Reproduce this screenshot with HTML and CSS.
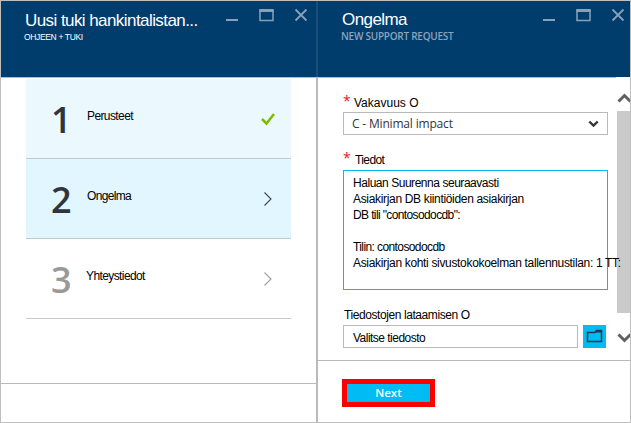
FILE: index.html
```html
<!DOCTYPE html>
<html lang="fi">
<head>
<meta charset="utf-8">
<title>Ongelma</title>
<link rel="stylesheet" href="styles.css">
</head>
<body>
<div class="portal">
  <section class="blade blade-steps">
    <header class="blade-header">
      <div class="heading">
        <h1 class="title title-request">Uusi tuki hankintalistan...</h1>
        <p class="subtitle subtitle-help">OHJEEN + TUKI</p>
      </div>
      <svg class="controls" width="84" height="16" viewBox="0 0 84 16" fill="none" stroke="#87a1b9">
        <path d="M1 13h12" stroke-width="2"/>
        <path d="M35 3v10.500h13v-10.500" stroke-width="1.5"/><path d="M34.250 3.500h14.500" stroke-width="3"/>
        <path d="M70.500 2.500l11 11M81.500 2.500l-11 11" stroke-width="1.8"/>
      </svg>
    </header>
    <ol class="steps">
      <li class="step step-done">
        <span class="number">1</span><span class="label label-basics">Perusteet</span>
        <svg class="mark" width="16" height="16" viewBox="0 0 16 16" fill="none" stroke="#7fba00" stroke-width="2.5"><path d="M2 7l4.500 4.500L14 2"/></svg>
      </li>
      <li class="step step-active">
        <span class="number">2</span><span class="label label-problem">Ongelma</span>
        <svg class="mark" width="16" height="16" viewBox="0 0 16 16" fill="none" stroke="#3b4652" stroke-width="1.1"><path d="M4.500 .5L11 7l-6.500 6.500"/></svg>
      </li>
      <li class="step step-pending">
        <span class="number">3</span><span class="label label-contact">Yhteystiedot</span>
        <svg class="mark" width="16" height="16" viewBox="0 0 16 16" fill="none" stroke="#a0a0a0" stroke-width="1.1"><path d="M4.500 .5L11 7l-6.500 6.500"/></svg>
      </li>
    </ol>
    <footer class="blade-footer"></footer>
  </section>
  <section class="blade blade-problem">
    <header class="blade-header">
      <div class="heading">
        <h2 class="title title-problem">Ongelma</h2>
        <p class="subtitle subtitle-new">NEW SUPPORT REQUEST</p>
      </div>
      <svg class="controls" width="84" height="16" viewBox="0 0 84 16" fill="none" stroke="#87a1b9">
        <path d="M1 13h12" stroke-width="2"/>
        <path d="M35 3v10.500h13v-10.500" stroke-width="1.5"/><path d="M34.250 3.500h14.500" stroke-width="3"/>
        <path d="M70.500 2.500l11 11M81.500 2.500l-11 11" stroke-width="1.8"/>
      </svg>
    </header>
    <div class="content">
      <form class="form">
        <div class="caption caption-severity"><span class="star">*</span><span class="text-severity">Vakavuus O</span></div>
        <div class="field select"><span class="choice">C - Minimal impact</span>
          <svg width="11" height="8" viewBox="0 0 11 8" fill="none" stroke="#30353d" stroke-width="2.4"><path d="M1.300 1.500l4.200 4 4.200-4"/></svg>
        </div>
        <div class="caption caption-details"><span class="star">*</span><span class="text-details">Tiedot</span></div>
        <div class="details">
          <p class="line line-want">Haluan Suurenna seuraavasti</p>
          <p class="line line-quota">Asiakirjan DB kiintiöiden asiakirjan</p>
          <p class="line line-account">DB tili "contosodocdb":</p>
          <p class="line"></p>
          <p class="line line-name">Tilin: contosodocdb</p>
          <p class="line line-storage">Asiakirjan kohti sivustokokoelman tallennustilan: 1 TT:</p>
        </div>
        <div class="caption caption-upload">Tiedostojen lataamisen O</div>
        <div class="upload">
          <div class="field file"><span class="file-text">Valitse tiedosto</span></div>
          <div class="browse">
            <svg width="17" height="15" viewBox="0 0 17 15"><path d="M1.500 3.500H9L10.500 1.500H15.500V12.500H1.500Z" fill="none" stroke="#24394a" stroke-width="1.5"/><path d="M9 3.500L10.500 1.500H15.500V3.500Z" fill="#24394a"/></svg>
          </div>
        </div>
      </form>
      <div class="scrollbar">
        <svg width="13" height="10" viewBox="0 0 13 10" fill="none" stroke="#606060" stroke-width="3"><path d="M1.500 8.500L7.500 2.500l6 6"/></svg>
        <div class="thumb"></div>
        <svg width="13" height="10" viewBox="0 0 13 10" fill="none" stroke="#606060" stroke-width="3"><path d="M1.500 1.500l6 6 6-6"/></svg>
      </div>
    </div>
    <footer class="blade-footer"><div class="next">Next</div></footer>
  </section>
</div>
</body>
</html>
```

FILE: styles.css
```css
* { box-sizing: border-box; }
body, h1, h2, p, ol { margin: 0; padding: 0; }
body { width: 631px; height: 423px; overflow: hidden; background: #fff; color: #000; font: 12px/16px "Liberation Sans", sans-serif; }
.portal { display: grid; grid-template-columns: 317px 312px; width: 631px; height: 423px; border: 1px solid #bfbfbf; }
.blade { display: flex; flex-direction: column; height: 421px; min-width: 0; }
.blade-steps { border-right: 2px solid #bababa; }
.blade-header { display: flex; justify-content: space-between; height: 76px; flex: none; background: #003c6c; color: #fff; }
.blade-steps .blade-header { width: 317px; padding-left: 23px; padding-right: 7px; border-right: 2px solid #1a4d79; }
.blade-problem .blade-header { padding-left: 23px; padding-right: 4px; }
.controls { margin-top: 6px; flex: none; }
.heading { padding-top: 10px; white-space: nowrap; }
.title { font-size: 17px; line-height: 20px; font-weight: 400; }
.title-request { padding-left: 1px; letter-spacing: -.57px; }
.title-problem { padding-left: 1px; letter-spacing: -.57px; margin-top: -1px; }
.subtitle { line-height: 12px; }
.subtitle-help { font-size: 8.5px; letter-spacing: -.35px; }
.subtitle-new { font: 600 10px/12px "Open Sans", sans-serif; color: #8ba5bc; letter-spacing: -.25px; }
.steps { flex: 1; list-style: none; padding: 1px 25px 0; border-top: 1px solid #bababa; }
.step { display: flex; align-items: center; height: 80px; border-bottom: 1px solid #c5c9cc; padding: 2px 15px 0 25px; }
.step-done { background: #ebf9ff; }
.step-active { background: #e1f6fe; }
.number { width: 36px; font: 600 36px/40px "Open Sans", sans-serif; color: #30343d; }
.step-pending .number { color: #999; }
.label { flex: 1; padding-bottom: 8px; }
.label-basics { letter-spacing: -.6px; }
.label-problem { letter-spacing: -.67px; }
.label-contact { letter-spacing: -.6px; margin-left: -1px; }
.blade-footer { border-top: 1px solid #bababa; }
.blade-steps .blade-footer { height: 39px; }
.blade-problem .blade-footer { height: 62px; padding: 18px 0 0 24px; }
.content { display: flex; justify-content: space-between; height: 283px; padding-left: 25px; }
.form { position: relative; z-index: 1; width: 265px; padding-top: 17px; white-space: nowrap; }
.content::before { content: ""; position: absolute; left: 318px; top: 77px; width: 298px; height: 1px; background: #bababa; }
.caption { display: flex; height: 18px; }
.caption-severity { padding-top: 1px; }
.star { width: 11px; color: #e81123; font: 14px/12px "Open Sans", sans-serif; }
.field { height: 23px; border: 1px solid #bababa; background: #fff; }
.select { display: flex; align-items: center; justify-content: space-between; padding: 0 8px; }
.choice { font: 12px/20px "Open Sans", sans-serif; color: #30353d; letter-spacing: -.18px; }
.caption-details { margin-top: 17px; padding-top: 0; }
.text-details { margin-left: 1px; letter-spacing: -.6px; }
.details { height: 120px; border: 1px solid #00bcf2; padding: 4px 9px; }
.line { height: 16px; }
.line-want { letter-spacing: -.46px; }
.line-quota { letter-spacing: -.33px; }
.line-account { letter-spacing: -.62px; }
.line-name { letter-spacing: -.6px; }
.line-storage { letter-spacing: -.33px; }
.caption-upload { margin-top: 17px; padding-left: 1px; letter-spacing: -.42px; }
.upload { display: flex; gap: 5px; }
.file { width: 235px; padding: 4px 9px; line-height: 16px; }
.file-text { letter-spacing: -.52px; }
.browse { display: grid; place-items: center; width: 23px; height: 23px; background: #00bcf2; }
.scrollbar { width: 13px; height: 270px; padding-top: 16px; display: flex; flex-direction: column; }
.thumb { flex: none; height: 202px; margin: 8px 0 20px; background: #cacaca; }
.scrollbar svg { flex: none; }
.next { width: 93px; height: 28px; border: 5px solid #f00; background: #00bcf2; color: #fff; text-align: center; font: 600 11.500px/18px "Open Sans", sans-serif; }
```
